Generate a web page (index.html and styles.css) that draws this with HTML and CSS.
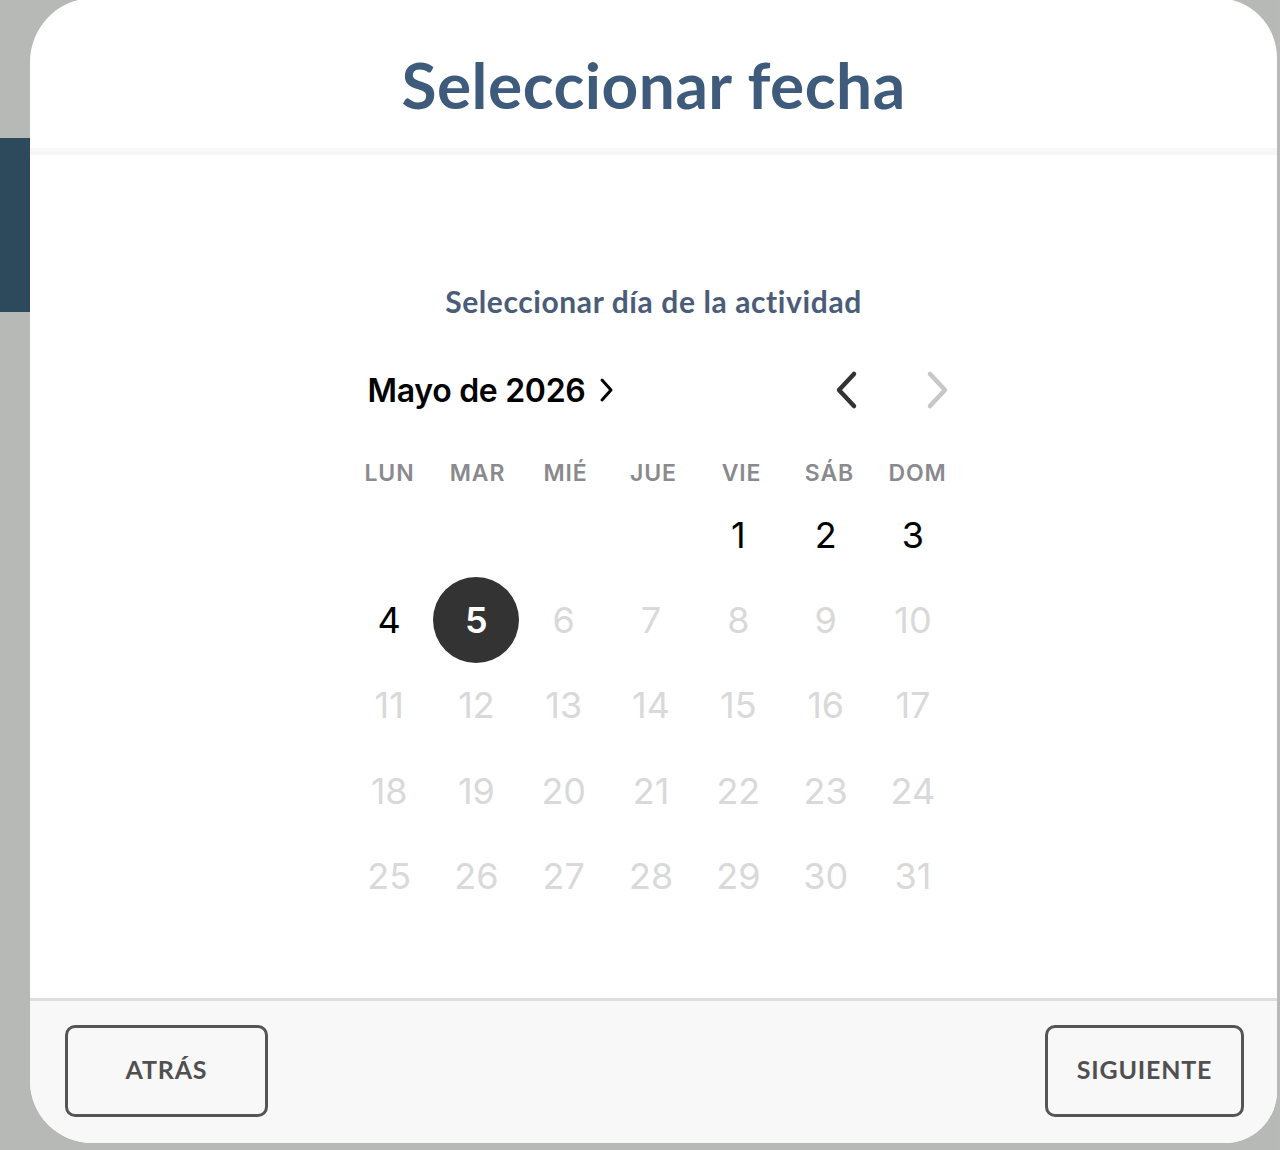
FILE: index.html
```html
<!DOCTYPE html>
<html lang="es">
<head>
<meta charset="utf-8">
<title>Seleccionar fecha</title>
<link rel="stylesheet" href="styles.css">
</head>
<body>
<div class="page">
  <div class="page-tab"></div>
</div>
<div class="modal">
  <header class="modal-header">
    <h1 class="modal-title">Seleccionar fecha</h1>
  </header>
  <main class="modal-body">
    <p class="subtitle">Seleccionar día de la actividad</p>
    <div class="calendar">
      <div class="month-row">
        <div class="month-label">Mayo de 2026
          <svg class="month-chev" width="16" height="26" viewBox="0 0 16 26"><path d="M3 3 L12 13 L3 23" fill="none" stroke="#000" stroke-width="3" stroke-linecap="round" stroke-linejoin="round"/></svg>
        </div>
        <div class="month-nav">
          <svg class="nav-btn" width="26" height="40" viewBox="0 0 26 40"><path d="M20 4 L5 20 L20 36" fill="none" stroke="#333" stroke-width="4.5" stroke-linecap="round" stroke-linejoin="round"/></svg>
          <svg class="nav-btn" width="26" height="40" viewBox="0 0 26 40"><path d="M6 4 L21 20 L6 36" fill="none" stroke="#c7c7c7" stroke-width="4.5" stroke-linecap="round" stroke-linejoin="round"/></svg>
        </div>
      </div>
      <div class="weekdays">
        <span>LUN</span><span>MAR</span><span>MIÉ</span><span>JUE</span><span>VIE</span><span>SÁB</span><span>DOM</span>
      </div>
      <div class="days">
        <span class="day"></span><span class="day"></span><span class="day"></span><span class="day"></span>
        <span class="day active">1</span><span class="day active">2</span><span class="day active">3</span>
        <span class="day active">4</span><span class="day selected"><span class="dot">5</span></span><span class="day">6</span><span class="day">7</span><span class="day">8</span><span class="day">9</span><span class="day">10</span>
        <span class="day">11</span><span class="day">12</span><span class="day">13</span><span class="day">14</span><span class="day">15</span><span class="day">16</span><span class="day">17</span>
        <span class="day">18</span><span class="day">19</span><span class="day">20</span><span class="day">21</span><span class="day">22</span><span class="day">23</span><span class="day">24</span>
        <span class="day">25</span><span class="day">26</span><span class="day">27</span><span class="day">28</span><span class="day">29</span><span class="day">30</span><span class="day">31</span>
      </div>
    </div>
  </main>
  <footer class="modal-footer">
    <button class="btn btn-back">ATRÁS</button>
    <button class="btn btn-next">SIGUIENTE</button>
  </footer>
</div>
</body>
</html>
```
FILE: styles.css
```css
* { box-sizing: border-box; }
html, body { margin: 0; padding: 0; }
body {
  width: 1280px;
  height: 1150px;
  background: #b6b9b6;
  overflow: hidden;
  position: relative;
  font-family: "Lato", "Open Sans", sans-serif;
}
.page {
  height: 100%;
  padding-top: 138px;
  border-right: 3px solid #b9b9b9;
}
.page-tab {
  width: 30px;
  height: 174px;
  background: #2c4a5c;
}
.modal {
  position: absolute;
  left: 30px;
  top: -2px;
  width: 1247px;
  height: 1145px;
  background: #ffffff;
  border-radius: 64px 60px 52px 62px;
  overflow: hidden;
  display: flex;
  flex-direction: column;
}
.modal-header {
  height: 157px;
  flex: none;
  display: flex;
  align-items: center;
  justify-content: center;
  border-bottom: 7px solid #f7f7f7;
}
.modal-title {
  margin: 0;
  padding-top: 22px;
  font-family: "Lato", sans-serif;
  font-weight: 700;
  font-size: 64px;
  color: #3e5b7b;
  letter-spacing: 0.5px;
}
.modal-body {
  flex: 1;
  display: flex;
  flex-direction: column;
  align-items: center;
  padding-top: 126px;
}
.subtitle {
  margin: 0;
  height: 40px;
  line-height: 40px;
  font-family: "Lato", sans-serif;
  font-weight: 700;
  font-size: 30px;
  color: #4b5c79;
  letter-spacing: 0.6px;
}
.calendar {
  width: 616px;
  margin-top: 44px;
  font-family: "Inter", "Noto Sans", sans-serif;
}
.month-row {
  height: 50px;
  display: flex;
  align-items: center;
  justify-content: space-between;
  padding: 0 12px 0 22px;
}
.month-label {
  display: flex;
  align-items: center;
  gap: 14px;
  font-size: 32px;
  font-weight: 600;
  color: #000;
  letter-spacing: -0.3px;
}
.month-chev { display: block; }
.month-nav {
  display: flex;
  align-items: center;
  gap: 64px;
}
.nav-btn { display: block; }
.weekdays {
  margin-top: 39px;
  height: 38px;
  display: grid;
  grid-template-columns: repeat(7, 88px);
  align-items: center;
  justify-items: center;
  font-size: 23px;
  font-weight: 600;
  color: #8a8a8e;
  letter-spacing: 0.9px;
}
.days {
  display: grid;
  grid-template-columns: repeat(7, 87.3px);
  grid-auto-rows: 85.3px;
  align-items: center;
  justify-items: center;
  font-size: 36px;
  font-weight: 400;
  color: #d9d9d9;
}
.day.active { color: #000; }
.dot {
  width: 86px;
  height: 86px;
  border-radius: 50%;
  background: #333333;
  color: #ffffff;
  display: flex;
  align-items: center;
  justify-content: center;
  font-weight: 600;
}
.modal-footer {
  height: 145px;
  flex: none;
  background: #f8f8f8;
  border-top: 3px solid #dedede;
  display: flex;
  align-items: flex-start;
  justify-content: space-between;
  padding: 24px 33px 0 35px;
}
.btn {
  height: 92px;
  padding: 0 0 4px;
  background: transparent;
  border: 3px solid #555555;
  border-radius: 10px;
  font-family: "Lato", sans-serif;
  font-weight: 700;
  font-size: 25px;
  color: #505050;
  letter-spacing: 0.8px;
  cursor: pointer;
}
.btn-back { width: 203px; }
.btn-next { width: 199px; }
```
